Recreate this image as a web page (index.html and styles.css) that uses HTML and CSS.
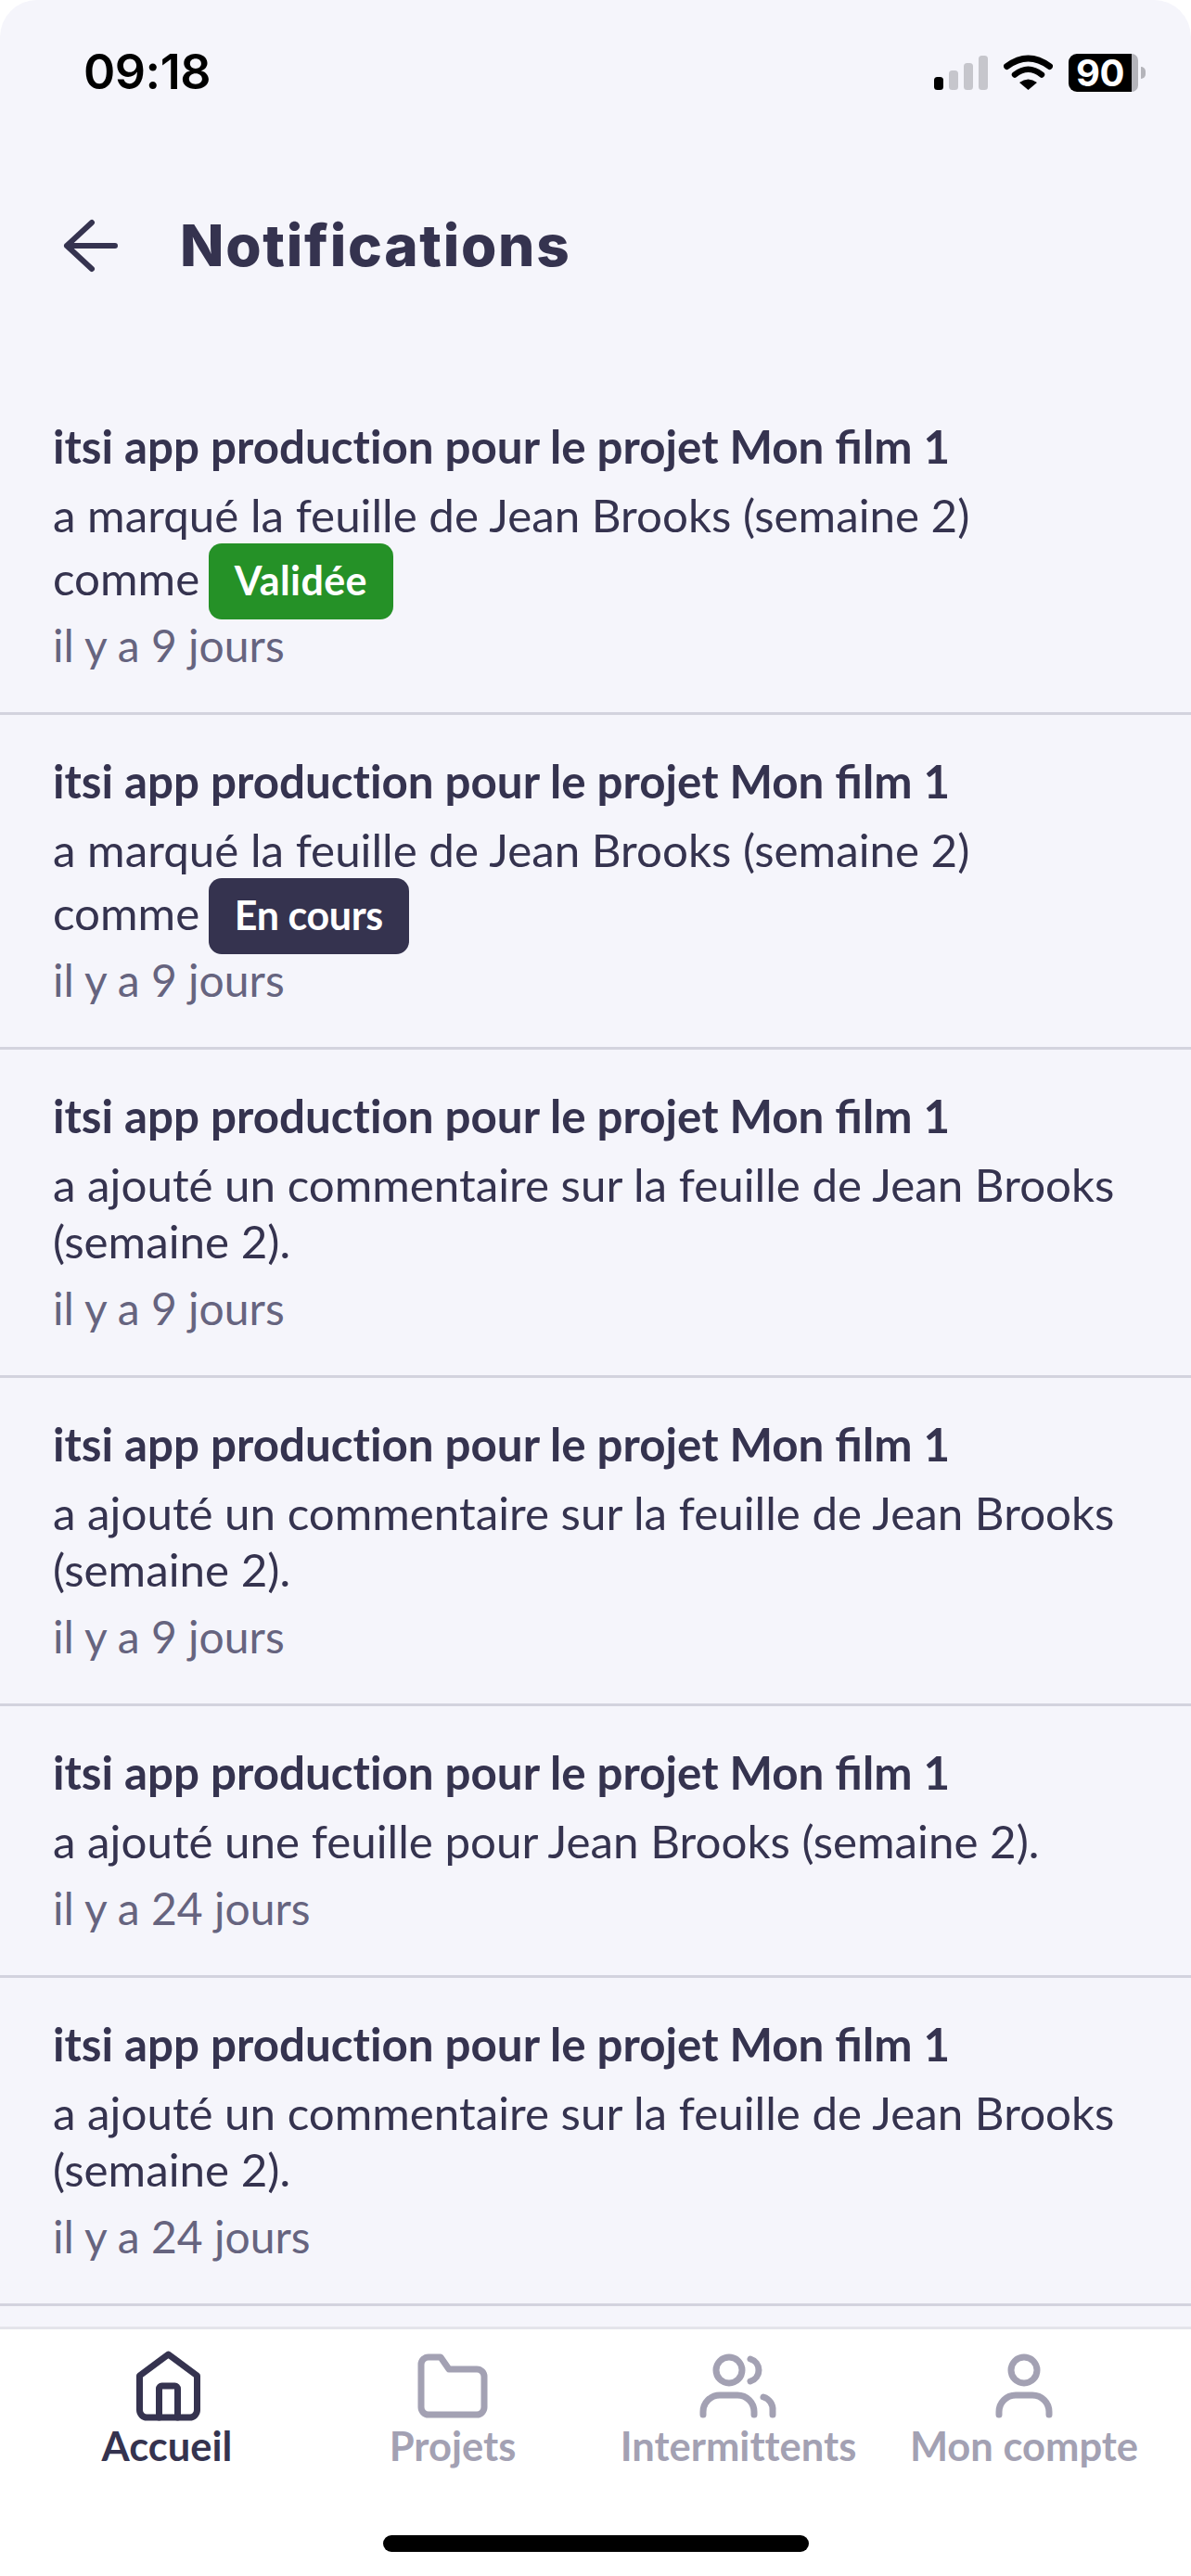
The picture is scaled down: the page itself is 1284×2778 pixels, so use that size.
FILE: index.html
```html
<!DOCTYPE html>
<html lang="fr">
<head>
<meta charset="utf-8">
<title>Notifications</title>
<link rel="stylesheet" href="styles.css">
</head>
<body>
<div class="app">
  <div class="status">
    <span class="time">09:18</span>
    <div class="status-icons">
      <svg class="signal" width="58" height="37" viewBox="0 0 58 37">
        <rect x="0" y="23" width="10" height="14" rx="3.5" fill="#000"/>
        <rect x="16" y="16" width="10" height="21" rx="3.5" fill="#c6c6cc"/>
        <rect x="32" y="8" width="10" height="29" rx="3.5" fill="#c6c6cc"/>
        <rect x="48" y="0" width="10" height="37" rx="3.5" fill="#c6c6cc"/>
      </svg>
      <svg class="wifi" width="53" height="38" viewBox="0 0 53 38">
        <path d="M3.5 12.5Q26.5 -4.5 49.5 12.5" fill="none" stroke="#000" stroke-width="7" stroke-linecap="round"/>
        <path d="M12 21.5Q26.5 10 41 21.5" fill="none" stroke="#000" stroke-width="6.5" stroke-linecap="round"/>
        <path d="M17 30Q26.5 23 36 30L26.5 38Z" fill="#000"/>
      </svg>
      <div class="battery">
        <div class="battery-body"><span class="battery-level">90</span></div>
        <div class="battery-end"></div>
        <div class="battery-nub"></div>
      </div>
    </div>
  </div>

  <header class="header">
    <svg class="back" width="60" height="60" viewBox="0 0 60 60">
      <path d="M4 30H56M31 5L4 30L31 55" fill="none" stroke="#35334f" stroke-width="6" stroke-linecap="round" stroke-linejoin="round"/>
    </svg>
    <h1 class="title">Notifications</h1>
  </header>

  <main class="list">
    <article class="row">
      <div class="who">itsi app product&zwnj;ion pour le projet Mon film 1</div>
      <div class="what">a marqué la feuille de Jean Brooks (semaine 2) <span class="state-line">comme <span class="badge badge-ok">Validée</span></span></div>
      <div class="when">il y a 9 jours</div>
    </article>
    <article class="row">
      <div class="who">itsi app product&zwnj;ion pour le projet Mon film 1</div>
      <div class="what">a marqué la feuille de Jean Brooks (semaine 2) <span class="state-line">comme <span class="badge badge-wip">En cours</span></span></div>
      <div class="when">il y a 9 jours</div>
    </article>
    <article class="row">
      <div class="who">itsi app product&zwnj;ion pour le projet Mon film 1</div>
      <div class="what">a ajouté un commentaire sur la feuille de Jean Brooks (semaine 2).</div>
      <div class="when">il y a 9 jours</div>
    </article>
    <article class="row">
      <div class="who">itsi app product&zwnj;ion pour le projet Mon film 1</div>
      <div class="what">a ajouté un commentaire sur la feuille de Jean Brooks (semaine 2).</div>
      <div class="when">il y a 9 jours</div>
    </article>
    <article class="row">
      <div class="who">itsi app product&zwnj;ion pour le projet Mon film 1</div>
      <div class="what">a ajouté une feuille pour Jean Brooks (semaine 2).</div>
      <div class="when">il y a 24 jours</div>
    </article>
    <article class="row">
      <div class="who">itsi app product&zwnj;ion pour le projet Mon film 1</div>
      <div class="what">a ajouté un commentaire sur la feuille de Jean Brooks (semaine 2).</div>
      <div class="when">il y a 24 jours</div>
    </article>
  </main>

  <nav class="tabs">
    <div class="tab tab-active">
      <svg class="tab-icon" width="90" height="84" viewBox="0 0 90 84">
        <path d="M46.5 8L15.5 31V68a8 8 0 0 0 8 8H69.5a8 8 0 0 0 8-8V31Z"/>
        <path d="M36.5 76V45a3 3 0 0 1 3-3H53.5a3 3 0 0 1 3 3V76"/>
      </svg>
      <span class="tab-label">Accueil</span>
    </div>
    <div class="tab">
      <svg class="tab-icon" width="90" height="84" viewBox="0 0 90 84">
        <path d="M11 19a8 8 0 0 1 8-8H32L41 24H71a8 8 0 0 1 8 8V65a8 8 0 0 1-8 8H19a8 8 0 0 1-8-8Z"/>
      </svg>
      <span class="tab-label">Projets</span>
    </div>
    <div class="tab">
      <svg class="tab-icon" width="90" height="84" viewBox="0 0 90 84">
        <circle cx="35" cy="25" r="14"/>
        <path d="M58 13a12.5 12.5 0 0 1 0 24"/>
        <path d="M7 73V70a18 18 0 0 1 18-18H44a18 18 0 0 1 18 18V73"/>
        <path d="M72 54a14 14 0 0 1 10 15V73"/>
      </svg>
      <span class="tab-label">Intermittents</span>
    </div>
    <div class="tab">
      <svg class="tab-icon" width="90" height="84" viewBox="0 0 90 84">
        <circle cx="45" cy="25" r="14"/>
        <path d="M18 73V70a18 18 0 0 1 18-18H54a18 18 0 0 1 18 18V73"/>
      </svg>
      <span class="tab-label">Mon compte</span>
    </div>
  </nav>
  <div class="home-zone"><div class="home-bar"></div></div>
</div>
</body>
</html>
```
FILE: styles.css
```css
* { box-sizing: border-box; }
html, body { margin: 0; padding: 0; background: #fff; }
body { width: 1284px; height: 2778px; overflow: hidden; font-family: "Lato", sans-serif; color: #35334f; }
.app { width: 1284px; height: 2778px; display: flex; flex-direction: column; background: #f5f5fb; border-radius: 40px 40px 0 0; overflow: hidden; }

.status { height: 130px; flex: none; padding: 51px 49px 0 90px; display: flex; justify-content: space-between; align-items: flex-start; }
.time { font-family: "Inter", sans-serif; font-weight: 600; font-size: 52px; line-height: 54px; color: #000; letter-spacing: -0.5px; }
.status-icons { display: flex; align-items: flex-end; margin-top: 7px; }
.signal { display: block; }
.wifi { display: block; margin-left: 17px; }
.battery { display: flex; align-items: center; margin-left: 17px; margin-bottom: -2px; }
.battery-body { width: 68px; height: 41px; background: #000; border-radius: 9px 0 0 9px; display: flex; align-items: center; justify-content: center; }
.battery-level { font-family: "Inter", sans-serif; font-weight: 700; font-size: 40px; line-height: 41px; letter-spacing: -0.5px; color: #fff; }
.battery-end { width: 7px; height: 41px; background: #b4b4ba; border-radius: 0 9px 9px 0; }
.battery-nub { width: 5px; height: 13px; margin-left: 3px; background: #b4b4ba; border-radius: 0 5px 5px 0; }

.header { flex: none; height: 280px; padding: 0 0 10px 68px; display: flex; align-items: center; gap: 66px; }
.back { display: block; }
.title { margin: 0; font-family: "Inter", sans-serif; font-weight: 800; font-size: 62px; line-height: 72px; letter-spacing: 1.7px; color: #35334f; }

.list { flex: 1; min-height: 0; }
.row { padding: 41px 57px 42px; border-bottom: 3px solid #d3d3de; }
.who { font-weight: 700; font-size: 49.3px; line-height: 61px; margin-bottom: 13px; }
.what { font-size: 49.3px; line-height: 61px; }
.state-line { white-space: nowrap; }
.when { font-size: 48px; line-height: 61px; margin-top: 11px; color: #66647f; }
.badge { display: inline-block; vertical-align: baseline; height: 82px; margin: 0 0 -16px -3px; padding: 0 28px 2px; border-radius: 14px; color: #fff; font-weight: 700; font-size: 43px; line-height: 80px; }
.badge-ok { background: #259127; letter-spacing: 0.4px; }
.badge-wip { background: #35334f; letter-spacing: -0.4px; }

.tabs { flex: none; height: 195px; background: #fff; border-top: 3px solid #e4e4ea; padding: 19px 26px 0; display: grid; grid-template-columns: repeat(4, 1fr); align-items: start; }
.tab { display: flex; flex-direction: column; align-items: center; color: #a3a1b3; }
.tab-icon { display: block; fill: none; stroke: #a3a1b3; stroke-width: 7; stroke-linecap: round; stroke-linejoin: round; }
.tab-label { font-weight: 700; font-size: 43.5px; line-height: 50px; margin-top: -3px; white-space: nowrap; font-variant-ligatures: none; }
.tab-active { color: #35334f; }
.tab-active .tab-icon { stroke: #35334f; }
.home-zone { flex: none; height: 74px; background: #fff; display: flex; justify-content: center; padding-top: 30px; }
.home-bar { width: 459px; height: 18px; background: #000; border-radius: 9px; }
```
